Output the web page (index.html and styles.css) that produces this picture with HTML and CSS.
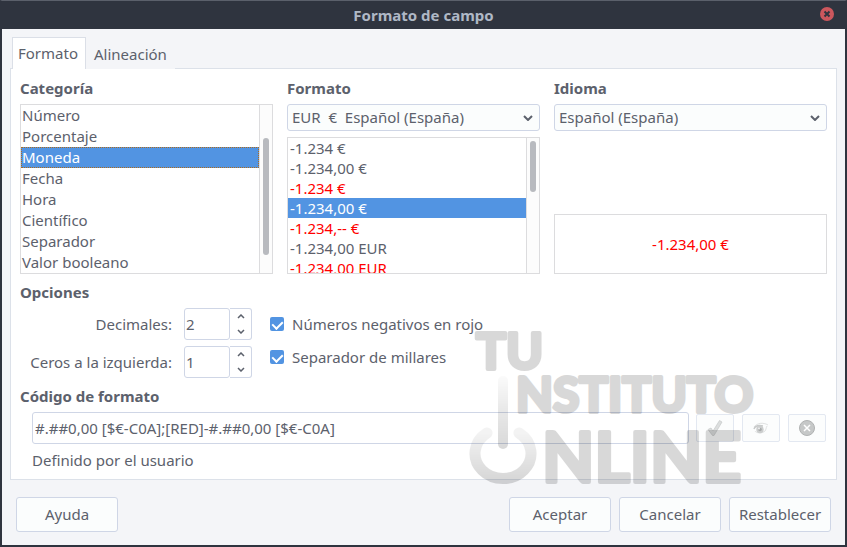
FILE: index.html
```
<!DOCTYPE html>
<html lang="es">
<head>
    <meta charset="UTF-8">
    <meta name="viewport" content="width=device-width, initial-scale=1.0">
    <title>Formato de campo</title>
    <link rel="stylesheet" href="styles.css">
</head>
<body>
    <div class="dialog">
        <header class="titlebar">
            <h1>Formato de campo</h1>
            <button type="button" class="close-button" aria-label="Cerrar">
                <svg width="14" height="14" viewBox="0 0 14 14"><circle cx="7" cy="7" r="7" fill="#cc575d"/><path d="M4.5 4.5l5 5M9.5 4.5l-5 5" stroke="#2f343f" stroke-width="2"/></svg>
            </button>
        </header>

        <form class="content">
            <div class="tabs" role="tablist">
                <button type="button" class="tab active" role="tab" aria-selected="true">Formato</button>
                <button type="button" class="tab" role="tab" aria-selected="false">Alineación</button>
            </div>

            <div class="panel">
                <div class="columns">
                    <div class="column">
                        <h2 id="category-title">Categoría</h2>
                        <div class="list-box">
                            <ul class="category-list" role="listbox" tabindex="0" aria-labelledby="category-title">
                                <li role="option">Número</li>
                                <li role="option">Porcentaje</li>
                                <li role="option" class="selected focused" aria-selected="true">Moneda</li>
                                <li role="option">Fecha</li>
                                <li role="option">Hora</li>
                                <li role="option">Científico</li>
                                <li role="option">Separador</li>
                                <li role="option">Valor booleano</li>
                            </ul>
                            <div class="scrollbar scrolled"><div class="thumb"></div></div>
                        </div>
                    </div>

                    <div class="column">
                        <h2><label for="currency">Formato</label></h2>
                        <div class="select-box">
                            <select id="currency">
                                <option>EUR&nbsp; €&nbsp; Español (España)</option>
                            </select>
                            <svg class="arrow" width="10" height="6" viewBox="0 0 10 6"><path d="M1 1l4 4 4-4"/></svg>
                        </div>
                        <div class="list-box format-box">
                            <ul class="format-list" role="listbox" tabindex="0" aria-label="Formato">
                                <li role="option">-1.234 €</li>
                                <li role="option">-1.234,00 €</li>
                                <li role="option" class="red">-1.234 €</li>
                                <li role="option" class="selected" aria-selected="true">-1.234,00 €</li>
                                <li role="option" class="red">-1.234,-- €</li>
                                <li role="option">-1.234,00 EUR</li>
                                <li role="option" class="red">-1.234,00 EUR</li>
                            </ul>
                            <div class="scrollbar"><div class="thumb"></div></div>
                        </div>
                    </div>

                    <div class="column">
                        <h2><label for="language">Idioma</label></h2>
                        <div class="select-box">
                            <select id="language">
                                <option>Español (España)</option>
                            </select>
                            <svg class="arrow" width="10" height="6" viewBox="0 0 10 6"><path d="M1 1l4 4 4-4"/></svg>
                        </div>
                        <div class="preview red">-1.234,00 €</div>
                    </div>
                </div>

                <h2>Opciones</h2>
                <div class="options">
                    <div class="numbers">
                        <label for="decimals">Decimales:</label>
                        <div class="spinner">
                            <input type="number" id="decimals" value="2">
                            <div class="steps">
                                <button type="button" aria-label="Más"><svg width="8" height="5" viewBox="0 0 8 5"><path d="M1 4l3-3 3 3"/></svg></button>
                                <button type="button" aria-label="Menos"><svg width="8" height="5" viewBox="0 0 8 5"><path d="M1 1l3 3 3-3"/></svg></button>
                            </div>
                        </div>
                        <label for="zeros">Ceros a la izquierda:</label>
                        <div class="spinner">
                            <input type="number" id="zeros" value="1">
                            <div class="steps">
                                <button type="button" aria-label="Más"><svg width="8" height="5" viewBox="0 0 8 5"><path d="M1 4l3-3 3 3"/></svg></button>
                                <button type="button" aria-label="Menos"><svg width="8" height="5" viewBox="0 0 8 5"><path d="M1 1l3 3 3-3"/></svg></button>
                            </div>
                        </div>
                    </div>
                    <div class="checks">
                        <label><input type="checkbox" checked>Números negativos en rojo</label>
                        <label><input type="checkbox" checked>Separador de millares</label>
                    </div>
                </div>

                <h2><label for="code">Código de formato</label></h2>
                <div class="code-row">
                    <input type="text" id="code" value="#.##0,00 [$€-C0A];[RED]-#.##0,00 [$€-C0A]">
                    <div class="code-buttons">
                        <button type="button" disabled aria-label="Añadir">
                            <svg width="16" height="16" viewBox="0 0 16 16"><path d="M1 9.500l3-1.500 2 3L12.500 0.500 15 2 7 15.500H5.500z" fill="#dcdede" stroke="#c6c8c8" stroke-width=".7"/></svg>
                        </button>
                        <button type="button" disabled aria-label="Editar comentario">
                            <svg width="16" height="16" viewBox="0 0 16 16" fill="none"><path d="M1 7c3-4 9-5 14-2M2 11c1 2 7 3 10 0 1-1 1-3 2-5" stroke="#e0e2e2"/><path d="M1 9c1-3 4-4 9-3" stroke="#c8caca" stroke-width="1.500"/><circle cx="7" cy="9.500" r="3.700" fill="#cccece"/><circle cx="7" cy="9.500" r="1.800" fill="#a9abab"/><circle cx="6" cy="8.500" r="1" fill="#eee"/></svg>
                        </button>
                        <button type="button" disabled aria-label="Eliminar">
                            <svg width="16" height="16" viewBox="0 0 16 16"><circle cx="8" cy="8" r="7.500" fill="#c6c8c8" stroke="#b0b2b2"/><path d="M5 5l6 6M11 5l-6 6" stroke="#fff" stroke-width="1.500"/></svg>
                        </button>
                    </div>
                </div>
                <p class="note">Definido por el usuario</p>
            </div>

            <footer class="actions">
                <button type="button" class="help">Ayuda</button>
                <button type="submit">Aceptar</button>
                <button type="button">Cancelar</button>
                <button type="reset">Restablecer</button>
            </footer>
        </form>

        <svg class="watermark" width="300" height="170" viewBox="0 0 300 170">
            <defs>
                <linearGradient id="stem" x1="0" y1="0" x2="0" y2="1">
                    <stop offset="0" stop-color="#000" stop-opacity=".1"/>
                    <stop offset=".5" stop-color="#000" stop-opacity=".6"/>
                    <stop offset="1" stop-color="#000"/>
                </linearGradient>
                <linearGradient id="ring" x1="0" y1="0" x2="0" y2="1">
                    <stop offset="0" stop-color="#000" stop-opacity=".3"/>
                    <stop offset="1" stop-color="#000"/>
                </linearGradient>
            </defs>
            <text x="11" y="50" font-size="50">TU</text>
            <text x="51" y="93" font-size="48">NSTITUTO</text>
            <text x="77" y="163" font-size="68">NLINE</text>
            <rect x="33" y="57" width="10" height="73" rx="5" fill="url(#stem)"/>
            <path d="M22 114A28 25 0 1 0 54 114" class="ring"/>
        </svg>
    </div>
</body>
</html>
```

FILE: styles.css
```
* {
    box-sizing: border-box;
}
body {
    margin: 0;
    font-family: "Noto Sans", sans-serif;
    font-size: 15px;
    line-height: 20px;
    color: #5c616c;
}
button, input, select {
    font: inherit;
    color: inherit;
}
h1, h2, p, ul {
    margin: 0;
    padding: 0;
}
svg {
    display: block;
}
.dialog {
    position: relative;
    display: flex;
    flex-direction: column;
    min-height: 100vh;
    background-color: #f4f5f8;
    border: 2px solid #2f343f;
    border-top: 1px solid #5b606b;
}
.titlebar {
    position: relative;
    height: 28px;
    background-color: #2f343f;
}
h1 {
    font-size: 15px;
    line-height: 28px;
    text-align: center;
    color: #afb8c6;
}
.close-button {
    position: absolute;
    top: 6px;
    right: 11px;
    padding: 0;
    border: none;
    background: none;
}
.content {
    padding: 8px 8px 0;
}

/* Tabs */
.tabs {
    position: relative;
    z-index: 1;
    display: flex;
    margin-bottom: -1px;
    padding-left: 2px;
}
.tab {
    height: 32px;
    padding: 2px 8px 0;
    border: none;
    background-color: #f4f5f8;
}
.tab.active {
    padding: 0 7px 2px 5px;
    border: 1px solid #dbdfe7;
    border-bottom: none;
    background-color: #fff;
}
.panel {
    padding: 9px;
    padding-bottom: 8px;
    border: 1px solid #dce1e9;
    background-color: #fff;
}
h2 {
    margin-bottom: 6px;
    font-size: 15px;
    line-height: 20px;
}

/* Lists */
.columns {
    display: grid;
    grid-template-columns: 253fr 253fr 273fr;
    gap: 14px;
    margin-bottom: 8px;
}
.column {
    display: flex;
    flex-direction: column;
    min-width: 0;
}
.list-box {
    display: flex;
    height: 170px;
    border: 1px solid #dcdcde;
}
.format-box {
    height: 137px;
    margin-top: 6px;
}
.list-box ul {
    flex: 1;
    overflow: hidden;
    list-style: none;
    outline: none;
}
.list-box li {
    padding: 0 1px;
    line-height: 21px;
}
.format-list li {
    padding: 0 2px;
    line-height: 20px;
}
.list-box .selected {
    background-color: #5294e2;
    color: #fff;
}
.list-box .focused {
    outline: 1px dotted #ad6b1d;
    outline-offset: -1px;
}
.red {
    color: #f00;
}
.scrollbar {
    width: 13px;
    padding: 3px;
    border-left: 1px solid #dcdcde;
    background-color: #fcfcfc;
}
.scrollbar.scrolled {
    padding-top: 33px;
}
.thumb {
    width: 6px;
    height: 51px;
    border-radius: 3px;
    background-color: #b8babf;
}
.scrolled .thumb {
    height: 117px;
}
.select-box {
    position: relative;
}
select {
    display: block;
    width: 100%;
    height: 27px;
    padding: 0 24px 2px 4px;
    border: 1px solid #cfd6e6;
    border-radius: 3px;
    background-color: #fbfdfd;
    appearance: none;
}
.arrow {
    position: absolute;
    top: 11px;
    right: 7px;
    pointer-events: none;
}
.arrow path, .steps path {
    fill: none;
    stroke: #5c616c;
    stroke-width: 2;
}
.preview {
    display: flex;
    align-items: center;
    justify-content: center;
    height: 60px;
    margin-top: auto;
    border: 1px solid #dcdcde;
}

/* Options */
.options {
    display: flex;
    gap: 18px;
    margin-bottom: 8px;
}
.numbers {
    display: grid;
    grid-template-columns: 152px 68px;
    align-items: center;
    gap: 6px 12px;
    text-align: right;
}
.spinner {
    display: flex;
    height: 32px;
}
.spinner input {
    width: 46px;
    padding: 0 1px;
    border: 1px solid #cfd6e6;
    border-radius: 3px;
    background-color: #fff;
    appearance: textfield;
}
.spinner input::-webkit-inner-spin-button {
    display: none;
}
.steps {
    display: flex;
    flex: 1;
    flex-direction: column;
    border: 1px solid #cfd6e6;
    border-left: none;
    border-radius: 0 3px 3px 0;
}
.steps button {
    display: flex;
    flex: 1;
    align-items: center;
    justify-content: center;
    padding: 0;
    border: none;
    background: none;
}
.steps path {
    stroke-width: 1.5;
}
.checks {
    display: flex;
    flex-direction: column;
    gap: 13px;
    padding-top: 6px;
}
.checks label {
    display: flex;
    align-items: center;
    gap: 8px;
}
.checks input {
    display: flex;
    justify-content: center;
    width: 14px;
    height: 14px;
    margin: 0;
    border-radius: 2px;
    background-color: #5294e2;
    appearance: none;
}
.checks input:checked::after {
    content: "";
    width: 5px;
    height: 8px;
    margin-top: 2px;
    border: solid #fff;
    border-width: 0 2px 2px 0;
    transform: rotate(45deg);
}

/* Format code */
.code-row {
    display: flex;
    align-items: center;
    gap: 7px;
    padding: 0 1px 0 12px;
}
.code-row input {
    flex: 1;
    min-width: 0;
    height: 32px;
    padding: 0 2px;
    border: 1px solid #cfd6e6;
    border-radius: 3px;
    background-color: #fff;
}
.code-buttons {
    display: flex;
    gap: 8px;
}
.code-buttons button {
    display: flex;
    align-items: center;
    justify-content: center;
    width: 38px;
    height: 28px;
    padding: 0;
    border: 1px solid #e3e8f1;
    border-radius: 2px;
    background-color: #fcfdfd;
}
.note {
    margin-bottom: 1px;
    padding: 6px 0 0 12px;
}

/* Buttons */
.actions {
    display: flex;
    gap: 8px;
    padding: 17px 6px 13px;
}
.actions button {
    width: 102px;
    height: 35px;
    padding: 0 0 2px;
    border: 1px solid #cfd6e6;
    border-radius: 3px;
    background-color: #fbfdfd;
}
.actions .help {
    margin-right: auto;
}

/* Watermark */
.watermark {
    position: absolute;
    right: 80px;
    bottom: 56px;
    opacity: 0.15;
    pointer-events: none;
}
.watermark text {
    font-family: Lato, sans-serif;
    font-weight: 700;
    stroke: #000;
    stroke-width: 4;
    stroke-linejoin: round;
}
.ring {
    fill: none;
    stroke: url(#ring);
    stroke-width: 11;
    stroke-linecap: round;
}
```
